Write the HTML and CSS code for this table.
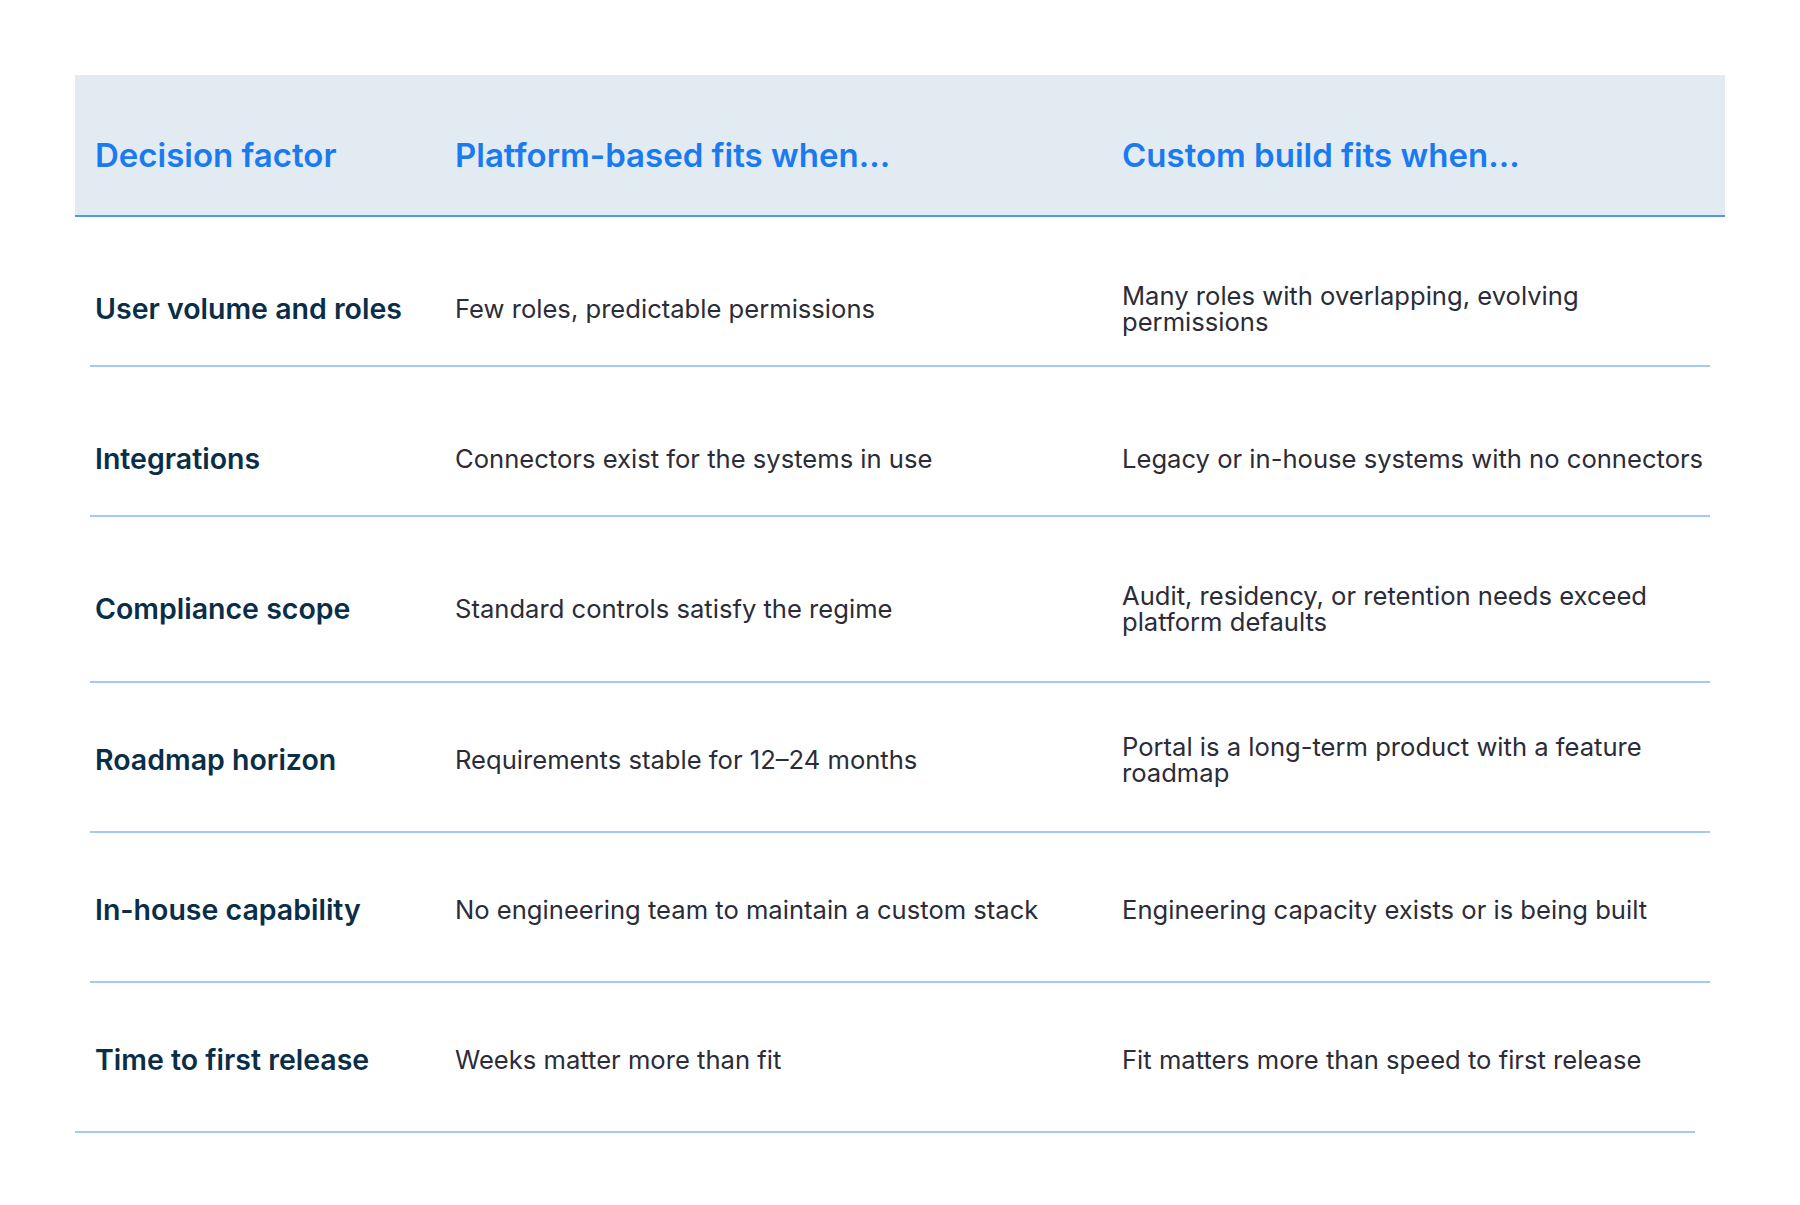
FILE: index.html
```html
<!DOCTYPE html>
<html lang="en">
<head>
<meta charset="utf-8">
<title>Platform vs custom build</title>
<link rel="stylesheet" href="styles.css">
</head>
<body>
<div class="table">
  <div class="head">
    <div class="hcell">Decision factor</div>
    <div class="hcell">Platform-based fits when...</div>
    <div class="hcell">Custom build fits when...</div>
  </div>
  <div class="row">
    <div class="factor">User volume and roles</div>
    <div class="cell">Few roles, predictable permissions</div>
    <div class="cell">Many roles with overlapping, evolving permissions</div>
  </div>
  <div class="row">
    <div class="factor">Integrations</div>
    <div class="cell">Connectors exist for the systems in use</div>
    <div class="cell">Legacy or in-house systems with no connectors</div>
  </div>
  <div class="row row-tall">
    <div class="factor">Compliance scope</div>
    <div class="cell">Standard controls satisfy the regime</div>
    <div class="cell">Audit, residency, or retention needs exceed platform defaults</div>
  </div>
  <div class="row row-raised">
    <div class="factor">Roadmap horizon</div>
    <div class="cell">Requirements stable for 12–24 months</div>
    <div class="cell">Portal is a long-term product with a feature roadmap</div>
  </div>
  <div class="row row-raised">
    <div class="factor">In-house capability</div>
    <div class="cell">No engineering team to maintain a custom stack</div>
    <div class="cell">Engineering capacity exists or is being built</div>
  </div>
  <div class="row row-raised row-last">
    <div class="factor">Time to first release</div>
    <div class="cell">Weeks matter more than fit</div>
    <div class="cell">Fit matters more than speed to first release</div>
  </div>
</div>
</body>
</html>
```
FILE: styles.css
```css
* { box-sizing: border-box; }

body {
  margin: 0;
  background: #ffffff;
  font-family: "Inter", "Open Sans", sans-serif;
}

.table {
  width: 1650px;
  margin: 75px 0 0 75px;
}

.head {
  display: grid;
  grid-template-columns: 360px 667px 1fr;
  padding: 60px 0 40px 20px;
  background: #e3ebf2;
  border-bottom: 2px solid #4f97f3;
}

.hcell {
  font-size: 33px;
  font-weight: 600;
  line-height: 40px;
  color: #1a7af0;
  white-space: nowrap;
}

.row {
  display: grid;
  grid-template-columns: 360px 667px 1fr;
  grid-auto-rows: minmax(52px, auto);
  align-items: center;
  margin: 0 15px;
  padding: 66px 0 30px 5px;
  border-bottom: 2px solid #a3c9f6;
}

.row-tall {
  padding-bottom: 46px;
}

.row-raised {
  padding-top: 51px;
  padding-bottom: 45px;
}

.row-last {
  margin: 0 30px 0 0;
  padding-left: 20px;
}

.factor {
  font-size: 28.5px;
  font-weight: 600;
  line-height: 32px;
  color: #0b2e48;
}

.cell {
  font-size: 25.6px;
  font-weight: 400;
  line-height: 26px;
  color: #2b2c37;
}
```
